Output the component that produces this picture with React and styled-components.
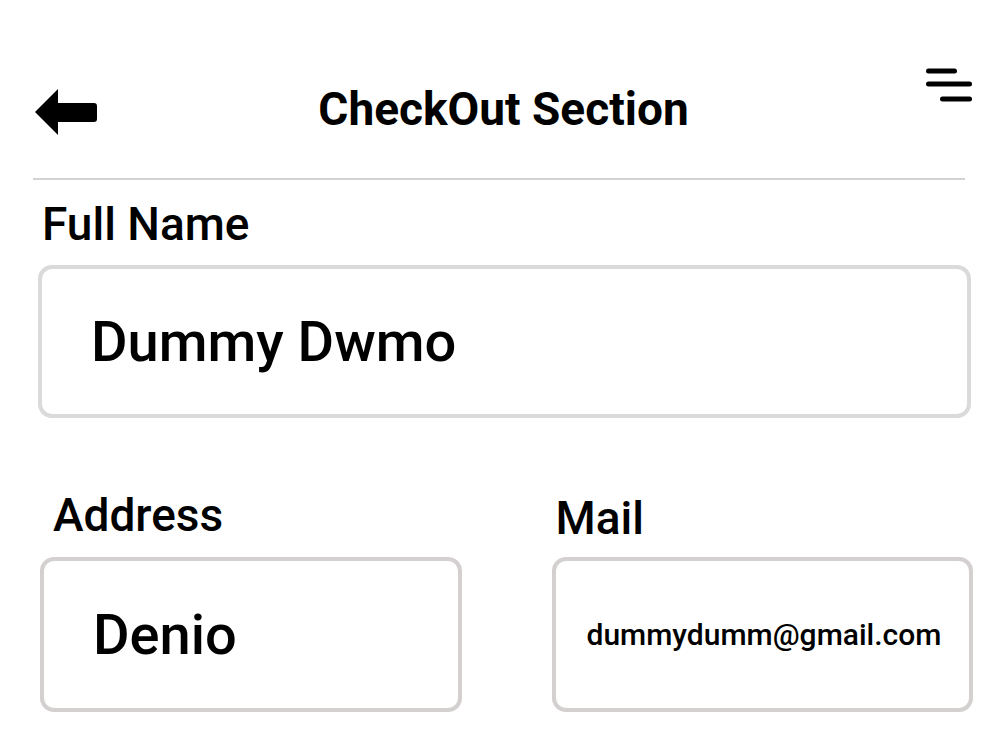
import React from "react";
import styled, { createGlobalStyle } from "styled-components";

const GlobalStyle = createGlobalStyle`
  body {
    margin: 0;
    background: #fff;
    font-family: Roboto, "Liberation Sans", sans-serif;
    color: #000;
  }
`;

const Page = styled.div`
  width: 1000px;
  height: 750px;
  box-sizing: border-box;
  padding: 0 29px 0 38px;
  overflow: hidden;
  background: #fff;
`;

const Header = styled.header`
  display: grid;
  grid-template-columns: 1fr auto 1fr;
  align-items: start;
  margin: 0 -1px 0 -3px;
  padding-top: 66px;
`;

const BackButton = styled.button`
  justify-self: start;
  margin-top: 23px;
  padding: 0;
  border: none;
  background: none;
  display: flex;
  cursor: pointer;
`;

const MenuButton = styled(BackButton)`
  justify-self: end;
  margin-top: 0;
`;

const Title = styled.h1`
  margin: 16px 0 0;
  font-size: 46px;
  font-weight: 700;
  line-height: 54px;
  white-space: nowrap;
`;

const Divider = styled.hr`
  margin: 42px 6px 0 -5px;
  height: 2px;
  border: none;
  background: #d3d3d3;
`;

const Form = styled.form`
  display: flex;
  flex-direction: column;
`;

const Row = styled.div`
  display: grid;
  grid-template-columns: 1fr 1fr;
  column-gap: 90px;
  margin: 70px -2px 0 2px;
`;

const Field = styled.div`
  display: flex;
  flex-direction: column;
  margin-top: ${(p) => p.$top || 0}px;
`;

const Label = styled.label`
  font-size: 46px;
  font-weight: 500;
  line-height: 54px;
  padding-left: ${(p) => p.$indent || 0}px;
  margin-top: ${(p) => p.$shift || 0}px;
  margin-bottom: ${(p) => p.$gap || 15}px;
`;

const Input = styled.div`
  box-sizing: border-box;
  height: ${(p) => p.$height || 155}px;
  display: flex;
  align-items: center;
  padding-left: ${(p) => p.$pad || 50}px;
  border: 4px solid ${(p) => p.$border || "#d4d0d0"};
  border-radius: 14px;
  font-size: ${(p) => p.$size || 56}px;
  font-weight: 500;
  white-space: nowrap;
  overflow: hidden;
`;

const BackArrow = () => (
  <svg width="62" height="46" viewBox="0 0 62 46">
    <path
      d="M0 23 L23 0 L23 14 L59 14 Q62 14 62 17 L62 30 Q62 33 59 33 L23 33 L23 46 Z"
      fill="#000"
    />
  </svg>
);

const MenuIcon = () => (
  <svg width="49" height="38" viewBox="0 0 49 38">
    <g stroke="#000" strokeWidth="5" strokeLinecap="round">
      <line x1="5.5" y1="5" x2="31.5" y2="5" />
      <line x1="5.5" y1="18" x2="46.5" y2="18" />
      <line x1="19.5" y1="33" x2="46.5" y2="33" />
    </g>
  </svg>
);

export default function App() {
  return (
    <>
      <GlobalStyle />
      <Page>
        <Header>
          <BackButton type="button" aria-label="Back">
            <BackArrow />
          </BackButton>
          <Title>CheckOut Section</Title>
          <MenuButton type="button" aria-label="Menu">
            <MenuIcon />
          </MenuButton>
        </Header>
        <Divider />
        <Form>
          <Field $top={17}>
            <Label $indent={4} $gap={14}>
              Full Name
            </Label>
            <Input $height={153} $pad={49} $border="#dadada">
              Dummy Dwmo
            </Input>
          </Field>
          <Row>
            <Field>
              <Label $indent={13}>Address</Label>
              <Input $pad={49}>Denio</Input>
            </Field>
            <Field>
              <Label $indent={4} $shift={3} $gap={12}>
                Mail
              </Label>
              <Input $pad={31} $size={30}>
                dummydumm@gmail.com
              </Input>
            </Field>
          </Row>
        </Form>
      </Page>
    </>
  );
}
